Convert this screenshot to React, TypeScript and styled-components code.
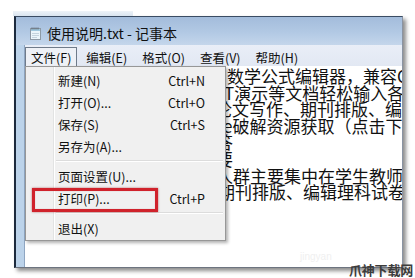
import React from "react";
import styled, { createGlobalStyle } from "styled-components";

const Global = createGlobalStyle`
  html, body { margin: 0; padding: 0; background: #fff; }
  body {
    width: 415px; height: 278px; overflow: hidden;
    font-family: "Noto Sans CJK SC", "Noto Sans", sans-serif;
  }
`;

const Page = styled.div`
  position: relative;
  width: 415px;
  height: 278px;
  box-sizing: border-box;
  padding: 0 12px 0 14px;
  background: #fff;
  overflow: hidden;
`;

const BackStrip = styled.div`
  height: 16px;
  display: flex;
  align-items: flex-end;
  margin-left: -1px;
`;

const BackBand = styled.div`
  width: 120px;
  height: 5px;
  background: linear-gradient(180deg, #eef3f8, #d9e4ef);
`;

const Window = styled.div`
  width: 389px;
  height: 252px;
  box-sizing: border-box;
  display: flex;
  flex-direction: column;
  border-top: 1px solid #3a4c63;
  border-left: 2px solid #1c2a3d;
  border-right: 1px solid #8a94a3;
  border-bottom: 1px solid #6d7480;
  box-shadow: 3px 3px 4px rgba(0, 0, 0, 0.45);
  background: #bcd2ea;
`;

const TitleBar = styled.div`
  height: 28px;
  flex: none;
  box-sizing: border-box;
  display: flex;
  align-items: center;
  gap: 6px;
  padding: 4px 0 0 14px;
  background: linear-gradient(180deg, #a3bcdb 0%, #b2c9e4 55%, #c4d6eb 100%);
`;

const TitleText = styled.span`
  font-size: 14px;
  line-height: 16px;
  color: #111;
  white-space: nowrap;
`;

const Body = styled.div`
  flex: 1;
  display: flex;
  min-height: 0;
`;

const LeftFrame = styled.div`
  width: 8px;
  flex: none;
  background: #bcd3ea;
  border-right: 1px solid #8fa6c2;
`;

const Client = styled.div`
  position: relative;
  flex: 1;
  display: flex;
  flex-direction: column;
  background: #fff;
  min-width: 0;
`;

const MenuBar = styled.div`
  height: 21px;
  flex: none;
  display: flex;
  align-items: stretch;
  gap: 3px;
  background: linear-gradient(180deg, #e9eef7 0%, #e2e8f3 100%);
`;

const MenuTitle = styled.div<{ $open?: boolean }>`
  display: flex;
  align-items: center;
  padding: 0 5px;
  font-size: 12.5px;
  color: #111;
  white-space: nowrap;
  box-sizing: border-box;
  border: 1px solid ${(p) => (p.$open ? "#6f7b8a" : "transparent")};
  border-bottom: none;
  background: ${(p) => (p.$open ? "#eef1f6" : "transparent")};
  margin-top: 2px;
`;

const TextArea = styled.div`
  flex: 1;
  overflow: hidden;
  padding: 2px 0 0 202px;
  background: #fff;
`;

const Line = styled.div<{ $shift: number }>`
  font-size: 17px;
  line-height: 16.6px;
  color: #111;
  white-space: nowrap;
  margin-left: ${(p) => p.$shift}px;
`;

const Dropdown = styled.div`
  position: absolute;
  left: 0;
  top: 21px;
  width: 201px;
  height: 175px;
  box-sizing: border-box;
  border: 1px solid #979797;
  padding: 2px 0 1px;
  background: linear-gradient(
    to right,
    #f0f0f0 0 27px,
    #e2e3e3 27px 28px,
    #ffffff 28px 29px,
    #f0f0f0 29px
  );
  box-shadow: 2px 2px 3px rgba(0, 0, 0, 0.3);
`;

const Item = styled.div`
  height: 22px;
  display: flex;
  align-items: center;
  justify-content: space-between;
  padding: 0 20px 0 32px;
  font-size: 12.5px;
  color: #111;
  white-space: nowrap;
`;

const Separator = styled.div`
  height: 8px;
  margin: 0 2px 0 30px;
  display: flex;
  flex-direction: column;
  justify-content: center;
  &::before {
    content: "";
    display: block;
    height: 1px;
    background: #dcdcdc;
    border-bottom: 1px solid #fff;
  }
`;

const Highlight = styled.div`
  position: absolute;
  left: 7px;
  top: 143px;
  width: 126px;
  height: 24px;
  box-sizing: border-box;
  border: 3px solid #d0222b;
  box-shadow: 0 0 2px rgba(140, 0, 0, 0.55), inset 0 0 1px rgba(140, 0, 0, 0.4);
`;

const Watermark = styled.div`
  position: absolute;
  right: 2px;
  bottom: 1px;
  font-size: 13px;
  font-weight: 700;
  line-height: 14px;
  color: #3c3c3c;
  letter-spacing: -0.2px;
`;

const FaintMark = styled.div`
  position: absolute;
  left: 300px;
  bottom: 16px;
  font-size: 10px;
  color: #f0f0f0;
  font-family: "Liberation Sans", sans-serif;
`;

const NotepadIcon = () => (
  <svg width="11" height="13" viewBox="0 0 11 13">
    <rect x="0.5" y="1.5" width="10" height="11" fill="#eaf6fb" stroke="#8d9aa6" />
    <rect x="1" y="2" width="9" height="2" fill="#9fc9df" />
    <path d="M2 0.5v2M4 0.5v2M6 0.5v2M8 0.5v2" stroke="#5d6670" strokeWidth="1" />
    <path d="M2 6.5h7M2 8.5h7M2 10.5h5" stroke="#c4d4de" strokeWidth="1" />
  </svg>
);

const menus = [
  { label: "文件(F)", open: true },
  { label: "编辑(E)" },
  { label: "格式(O)" },
  { label: "查看(V)" },
  { label: "帮助(H)" },
];

const lines: { text: string; shift: number }[] = [
  { text: "数学公式编辑器，兼容Office", shift: 0 },
  { text: "T演示等文档轻松输入各种", shift: -3 },
  { text: "论文写作、期刊排版、编辑", shift: -12 },
  { text: "e破解资源获取（点击下载", shift: -4 },
  { text: "答", shift: -11 },
  { text: "要", shift: -11 },
  { text: "人群主要集中在学生教师以", shift: -11 },
  { text: "期刊排版、编辑理科试卷等", shift: -9 },
];

type Entry = { label: string; key?: string } | "sep";

const entries: Entry[] = [
  { label: "新建(N)", key: "Ctrl+N" },
  { label: "打开(O)...", key: "Ctrl+O" },
  { label: "保存(S)", key: "Ctrl+S" },
  { label: "另存为(A)..." },
  "sep",
  { label: "页面设置(U)..." },
  { label: "打印(P)...", key: "Ctrl+P" },
  "sep",
  { label: "退出(X)" },
];

export default function App() {
  return (
    <>
      <Global />
      <Page>
        <BackStrip>
          <BackBand />
        </BackStrip>
        <Window>
          <TitleBar>
            <NotepadIcon />
            <TitleText>使用说明.txt - 记事本</TitleText>
          </TitleBar>
          <Body>
            <LeftFrame />
            <Client>
              <MenuBar>
                {menus.map((m) => (
                  <MenuTitle key={m.label} $open={m.open}>
                    {m.label}
                  </MenuTitle>
                ))}
              </MenuBar>
              <TextArea>
                {lines.map((l, i) => (
                  <Line key={i} $shift={l.shift}>
                    {l.text}
                  </Line>
                ))}
              </TextArea>
              <Dropdown>
                {entries.map((e, i) =>
                  e === "sep" ? (
                    <Separator key={i} />
                  ) : (
                    <Item key={i}>
                      <span>{e.label}</span>
                      {e.key && <span>{e.key}</span>}
                    </Item>
                  )
                )}
              </Dropdown>
              <Highlight />
            </Client>
          </Body>
        </Window>
        <FaintMark>jingyan</FaintMark>
        <Watermark>爪神下载网</Watermark>
      </Page>
    </>
  );
}
